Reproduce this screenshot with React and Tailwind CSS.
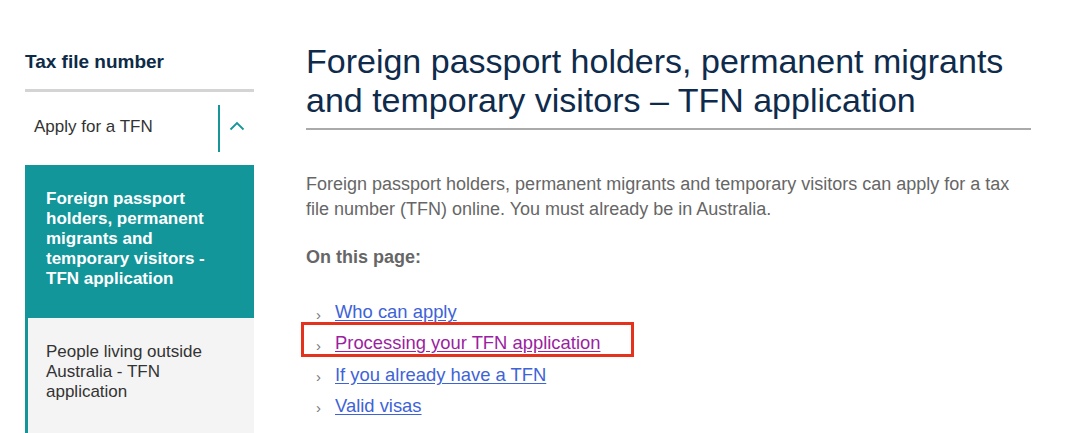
import React from "react";

const links = [
  { label: "Who can apply", visited: false },
  { label: "Processing your TFN application", visited: true, highlight: true },
  { label: "If you already have a TFN", visited: false },
  { label: "Valid visas", visited: false },
];

function ChevronUp() {
  return (
    <svg width="16" height="10" viewBox="0 0 16 10" fill="none" className="mb-[5px]">
      <path d="M1.5 8.5 L8 2 L14.5 8.5" stroke="#17969a" strokeWidth="1.8" />
    </svg>
  );
}

function LinkRow({ link }) {
  return (
    <>
      <span className="text-[15px] text-[#777] w-[19px] pt-[6px]">›</span>
      <a
        href="#"
        className={
          "text-[18.4px] underline underline-offset-2 " +
          (link.visited ? "text-[#9b1fa0]" : "text-[#3e63d8]")
        }
      >
        {link.label}
      </a>
    </>
  );
}

export default function App() {
  return (
    <div className="w-[1080px] h-[433px] overflow-hidden bg-white flex font-['Liberation_Sans',Arial,sans-serif]">
      {/* Sidebar */}
      <aside className="ml-[25px] w-[229px] shrink-0 pt-[51px]">
        <h2 className="text-[19px] leading-[22px] font-bold text-[#0d2a47] pb-[16px]">
          Tax file number
        </h2>
        <div className="border-t-[3px] border-[#d4d4d4]">
          <div className="flex items-center h-[73px]">
            <span className="flex-1 pl-[9px] text-[17px] text-[#333] mb-[4px]">Apply for a TFN</span>
            <div className="h-[47px] border-l-2 border-[#17969a] w-[36px] flex items-center justify-center">
              <ChevronUp />
            </div>
          </div>
          <div className="bg-[#12969a] h-[153px] pl-[21px] pr-[20px] pt-[24px]">
            <p className="text-[17px] leading-[20px] font-bold text-white">
              Foreign passport holders, permanent migrants and temporary visitors - TFN application
            </p>
          </div>
          <div className="bg-[#f4f4f4] border-l-[3px] border-[#12969a] h-[140px] pl-[18px] pr-[20px] pt-[24px]">
            <p className="text-[17px] leading-[20px] text-[#333]">
              People living outside Australia - TFN application
            </p>
          </div>
        </div>
      </aside>

      {/* Main content */}
      <main className="ml-[52px] w-[725px] shrink-0 pt-[42px]">
        <h1 className="text-[34px] leading-[39px] text-[#0f2b4c] pb-[8px] border-b-2 border-[#aaaaaa]">
          Foreign passport holders, permanent migrants and temporary visitors – TFN application
        </h1>
        <p className="mt-[42px] text-[18px] leading-[25px] text-[#666]">
          Foreign passport holders, permanent migrants and temporary visitors can apply for a tax file number
          (TFN) online. You must already be in Australia.
        </p>
        <p className="mt-[22px] text-[18px] font-bold text-[#666]">On this page:</p>
        <ul className="mt-[25px] flex flex-col">
          {links.map((l, i) =>
            l.highlight ? (
              <li
                key={l.label}
                className="flex items-center -ml-[5px] pl-[12px] w-[333px] h-[35px] pt-[7px] border-[3px] border-[#e5321d]"
              >
                <LinkRow link={l} />
              </li>
            ) : (
              <li
                key={l.label}
                className={
                  "flex items-center pl-[10px] " +
                  (i === 0 ? "h-[26px] pt-[6px]" : i === 2 ? "h-[31px] mt-[2px]" : "h-[31px]")
                }
              >
                <LinkRow link={l} />
              </li>
            )
          )}
        </ul>
      </main>
    </div>
  );
}
